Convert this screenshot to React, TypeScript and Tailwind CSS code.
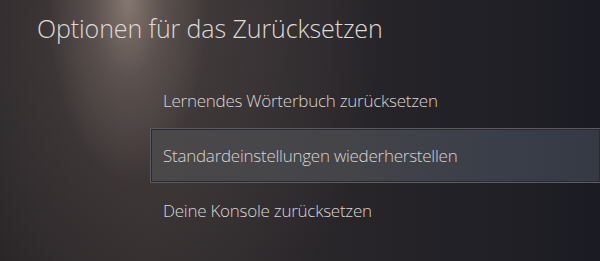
const items = [
  'Lernendes Wörterbuch zurücksetzen',
  'Standardeinstellungen wiederherstellen',
  'Deine Konsole zurücksetzen',
];

export default function App() {
  const selected = 1;
  return (
    <div
      className="relative w-[600px] h-[261px] overflow-hidden bg-[radial-gradient(ellipse_80px_180px_at_128px_0px,#857770_0%,#5a504d_45%,transparent_100%),radial-gradient(ellipse_240px_320px_at_140px_40px,#463f3f_0%,transparent_100%),linear-gradient(90deg,#272325_0%,#302b2c_25%,#29262a_55%,#1b1c23_100%)] text-[#dedad8]"
      style={{ fontFamily: '"Open Sans", "Noto Sans", sans-serif' }}
    >
      <h1 className="pl-[37px] pt-[11px] text-[25px] leading-[34px] font-light tracking-[-0.1px]">
        Optionen für das Zurücksetzen
      </h1>

      <ul className="mt-[28px] pl-[150px]">
        {items.map((label, i) => (
          <li
            key={label}
            className={
              i === selected
                ? 'h-[55px] flex items-center pl-3 border border-r-0 border-[#5a5b61] shadow-[inset_0_0_0_1px_#2a2a30] bg-[linear-gradient(90deg,#4b4849_0%,#454549_40%,#3b3f49_75%,#343944_100%)] text-[#d6d4d4]'
                : 'h-[55px] flex items-center pl-3 border border-transparent text-[#d9d5d3]'
            }
          >
            <span className="text-[17px] font-light tracking-[-0.25px]">{label}</span>
          </li>
        ))}
      </ul>
    </div>
  );
}
